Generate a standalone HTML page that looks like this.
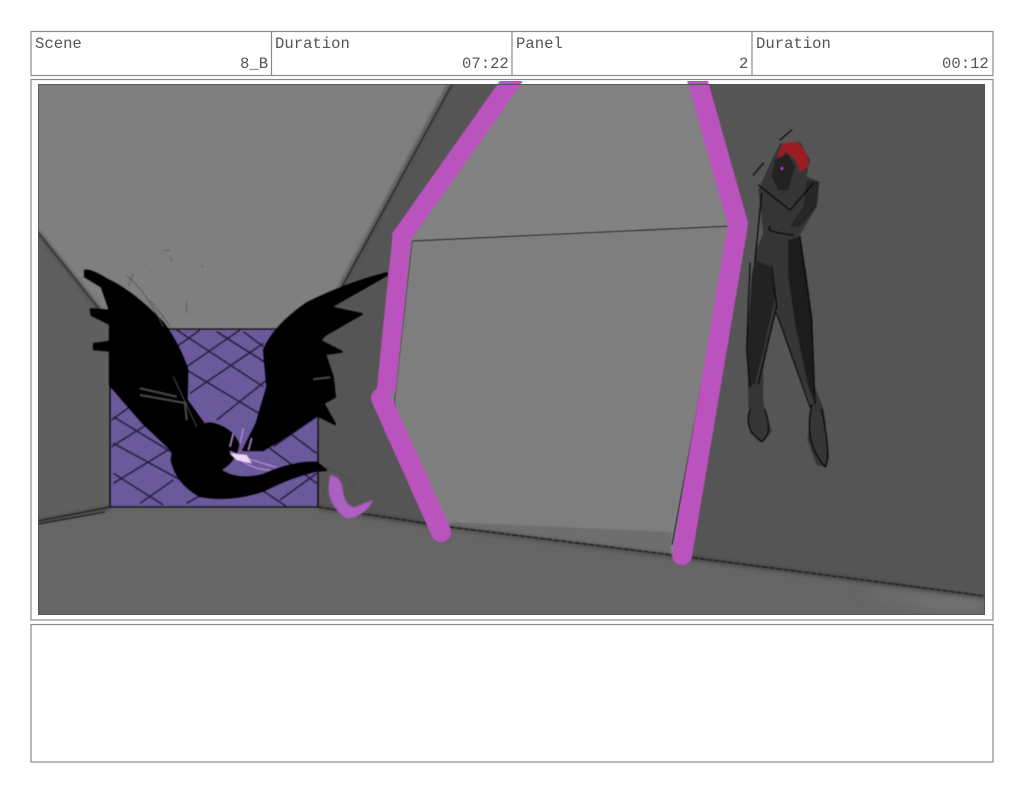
<!DOCTYPE html>
<html><head><meta charset="utf-8"><style>
html,body{margin:0;padding:0;background:#fff;width:1024px;height:793px;overflow:hidden}
svg{display:block}
text{font-family:"Liberation Mono",monospace;font-size:15.6px;fill:#555}
</style></head><body>
<svg width="1024" height="793" viewBox="0 0 1024 793" xmlns="http://www.w3.org/2000/svg">
<defs>
<clipPath id="c"><rect x="38" y="84" width="947" height="531"/></clipPath>
<clipPath id="c2"><rect x="38" y="81" width="947" height="534"/></clipPath>
<filter id="b" x="-5%" y="-5%" width="110%" height="110%"><feGaussianBlur stdDeviation="0.5"/></filter>
<filter id="s" x="-20%" y="-20%" width="140%" height="140%"><feGaussianBlur stdDeviation="1.6"/></filter>
<filter id="g" x="-30%" y="-30%" width="160%" height="160%"><feGaussianBlur stdDeviation="2.6"/></filter>
<filter id="l" x="-30%" y="-30%" width="160%" height="160%"><feGaussianBlur stdDeviation="7"/></filter>
</defs>
<rect width="1024" height="793" fill="#fff"/>
<g fill="none" stroke="#8a8a8a" stroke-width="1.2">
<rect x="31" y="31.5" width="962" height="44"/>
<path d="M271.5 31.5V75.5M512 31.5V75.5M752 31.5V75.5"/>
<rect x="31" y="79.5" width="962" height="540.5"/>
<rect x="31" y="624.5" width="962" height="137.5"/>
</g>
<text x="35" y="48">Scene</text>
<text x="240" y="68">8_B</text>
<text x="275" y="48">Duration</text>
<text x="462" y="68">07:22</text>
<text x="516" y="48">Panel</text>
<text x="739" y="68">2</text>
<text x="756" y="48">Duration</text>
<text x="942" y="68">00:12</text>

<g clip-path="url(#c)"><g filter="url(#b)">
<rect x="38" y="84" width="947" height="531" fill="#7f7f7f"/>
<polygon points="38,232 110,322 110,507 38,522" fill="#5e5e5e"/>
<polygon points="452,84 985,84 985,596 680,556 450,528 318,507 318,330 340,290" fill="#545454"/>
<polygon points="38,522 110,507 318,507 450,528 680,556 985,596 985,615 38,615" fill="#656565"/>
<polygon points="860,590 985,598 985,615 940,613" fill="#727272" filter="url(#l)"/>
<polygon points="510,84 698,84 742,224 680,555 442,530 385,400 400,235" fill="#828282"/>
<polygon points="412,241 732,226 672,532 450,522 394,405" fill="#7e7e7e"/>
<polygon points="450,522 672,532 670,557 445,530" fill="#6e6e6e"/>
<g fill="none" stroke="#333" filter="url(#s)" opacity=".55">
<path d="M450 84L340 288" stroke-width="4"/>
<path d="M38 232L108 320" stroke-width="4"/>
<path d="M318 508L450 528L680 557L985 597" stroke-width="4"/>
<path d="M38 522L110 508" stroke-width="4"/>
</g>
<g fill="none" stroke="#222">
<path d="M452 84L340 290" stroke-width="1.3"/>
<path d="M38 232L110 322" stroke-width="1"/>
<path d="M412 241L732 226" stroke-width="1.2"/>
<path d="M732 226L672 545" stroke-width="1.5"/>
<path d="M412 241L394 405L445 525" stroke-width=".8"/>
<path d="M318 507L450 527L680 556L985 596" stroke-width="1.8" stroke-dasharray="6 1"/>
<path d="M38 521L110 507M38 524L105 512" stroke-width="1.5"/>
</g>
<polygon points="110,329 318,329 318,507 110,507" fill="#6a5a9c"/>
<g transform="translate(30 220) scale(.33333)">
<g fill="none" stroke="#25213f" stroke-width="5.5">
<path d="M440 380L510 330M470 440L630 330M480 520L700 370M560 600L710 480M245 600L300 560M245 680L420 570M250 790L430 680M330 850L430 780M730 680L860 590M750 840L860 760M470 850L540 810"/>
<path d="M440 330L700 500M560 335L710 430M640 335L700 380M250 590L430 700M250 670L470 790M250 760L400 855M700 670L860 790M780 640L860 700M680 800L770 860M470 450L720 600"/>
</g>
</g>
<path d="M110 329H318V507H110Z" fill="none" stroke="#161616" stroke-width="1.8"/>
<path d="M110 290V507M318 440V507" stroke="#111" stroke-width="2" fill="none"/>
<g transform="translate(30 220) scale(.33333)">
<g fill="#050505" stroke="#050505" stroke-width="8" stroke-linejoin="round">
<path d="M165 152Q185 150 230 178Q310 215 400 310Q450 380 472 450L470 540L520 610L430 695L340 610L240 495L240 392L192 388L192 372L240 365L240 312L185 285L182 268L240 272L215 200L165 170Z"/>
<path d="M1070 160Q950 190 830 250Q730 320 702 390L712 500L680 610L640 690L700 690L780 640L860 585L915 612L880 550L915 530L908 470L885 402L935 395L870 362L885 345L995 282L900 262L1070 165Z"/>
<path d="M430 690Q470 620 540 610Q600 620 625 670Q620 720 570 750Q620 785 700 765Q790 725 860 728L888 750L860 752Q780 770 700 812Q600 845 510 828Q440 790 425 720Z"/>
</g>
<g fill="none" stroke="#484848" stroke-width="5">
<path d="M330 505L440 530M330 525L470 550M465 550L470 600M850 478L900 472"/>
</g>
<g fill="none" stroke="#4a4a4a" stroke-width="2">
<path d="M285 165Q340 200 400 320M310 160L295 200M470 245V280M340 130L345 135M400 92L420 90M430 470L500 620M880 740Q970 770 975 810M360 240Q400 290 420 320M420 110L425 125M515 135L518 142"/>
</g>
<g fill="none" stroke="#b889d4" stroke-width="3.5">
<path d="M600 695Q660 720 740 742M625 715Q670 750 720 750M610 640L600 680M640 625L630 670M665 655L655 690"/>
</g>
<path d="M600 700L650 705L665 730L620 720Z" fill="#efd6f5"/>
<path d="M900 765Q935 770 938 810Q945 860 975 862Q1000 850 1030 840Q1000 895 950 895Q905 870 895 810Z" fill="#ad60c4" filter="url(#g)"/>
</g>
<g transform="translate(700 110) scale(.33333)">
<path d="M175 240L215 150L240 100L300 95L330 150L320 200L358 215L350 290L300 375L315 480L338 630L345 830L372 900L388 1040L380 1072L350 1065L322 990L335 890L290 770L230 600L220 620L190 780L190 880L215 965L190 995L150 970L145 880L140 720L155 500L165 430L190 370Z" fill="#363636"/>
<path d="M265 390L300 380L318 480L338 630L345 880L325 830L285 640L265 500Z" fill="#1e1e1e"/>
<path d="M165 450L210 470L225 560L190 720L165 820L150 830L142 720L155 500Z" fill="#222"/>
<path d="M320 210L358 215L350 290L300 350L270 350L310 290Z" fill="#262626"/>
<path d="M232 135L250 100L290 95L320 130L325 170L300 185L285 145L255 125L240 150Z" fill="#9c1a20"/>
<path d="M225 150L262 130L285 170L265 240L235 240L215 200Z" fill="#242424"/>
<circle cx="246" cy="175" r="4" fill="#b040e0"/>
<g fill="none" stroke="#0b0b0b" stroke-width="5" stroke-linecap="round">
<path d="M160 195L190 160M240 90L275 60M175 225L270 300M270 300L340 220M210 350Q190 365 280 375M150 460L140 720L150 830M215 470L230 590L175 820M230 610L330 890M300 380L335 630L345 880M185 250L165 450"/>
<path d="M150 900Q130 960 185 995Q220 970 195 900M335 885Q310 1000 375 1070Q395 1040 365 900"/>
</g>
</g>
</g></g>
<g clip-path="url(#c2)" filter="url(#b)">
<g fill="none" stroke="#bb52bf" stroke-linejoin="round">
<path d="M515 76L402 236L386 392" stroke-width="19"/>
<path d="M381 398L441 532" stroke-width="20" stroke-linecap="round"/>
<path d="M695 72L738 224L682 555" stroke-width="20" stroke-linecap="round"/>
</g>
<circle cx="401" cy="236" r="9" fill="#bb52bf"/>
</g>
<rect x="38.5" y="84.5" width="946" height="530" fill="none" stroke="#4a4a4a" stroke-width="1" opacity=".8"/>
</svg>
</body></html>
